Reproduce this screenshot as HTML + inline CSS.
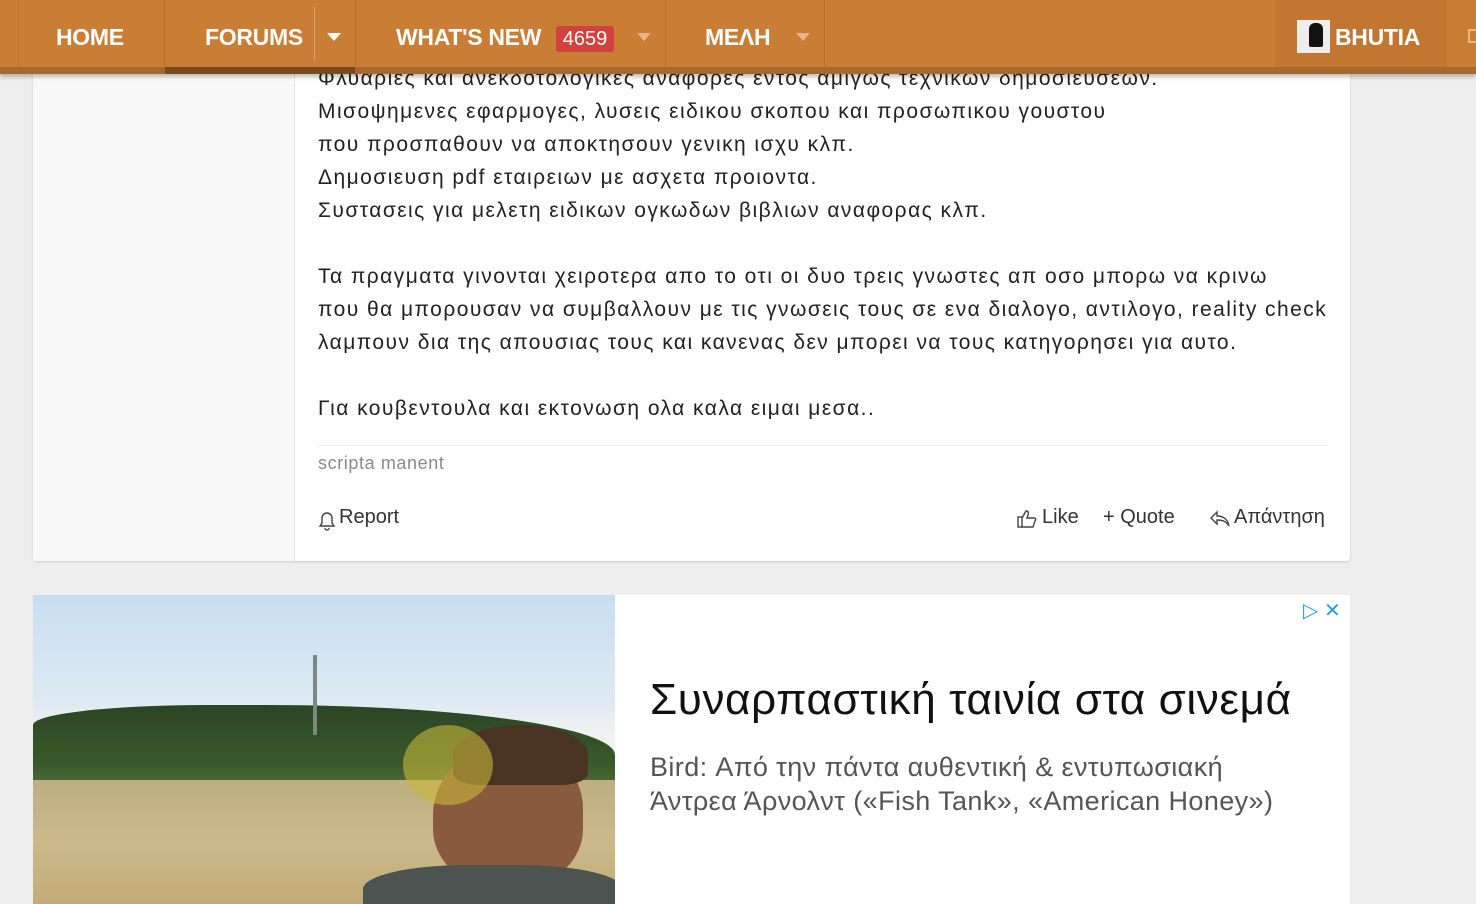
<!DOCTYPE html>
<html><head><meta charset="utf-8"><style>
*{margin:0;padding:0;box-sizing:border-box}
body{width:1476px;height:904px;overflow:hidden;background:#eeeeee;font-family:"Liberation Sans","DejaVu Sans",sans-serif;position:relative}
.nav{position:absolute;left:0;top:0;width:1476px;height:74px;background:#c97d35;box-shadow:0 3px 4px rgba(0,0,0,.25);z-index:5}
.nav .i{position:absolute;top:0;height:74px;color:#fff;font-weight:bold;font-size:23px;line-height:74px;letter-spacing:-0.3px}
.sep{position:absolute;top:0;width:1px;height:74px;background:#b86f2c}
.navb{position:absolute;left:0;top:67px;width:1476px;height:7px;background:#a9692e}
.tri{position:absolute;top:33px;width:0;height:0;border-left:7px solid transparent;border-right:7px solid transparent;border-top:8px solid #fff}
.card{position:absolute;left:33px;top:40px;width:1317px;height:521px;background:#fff;border-radius:4px;box-shadow:0 1px 2px rgba(0,0,0,.15)}
.left{position:absolute;left:0;top:0;width:262px;height:521px;background:#f9f9f9;border-right:1px solid #e2e2e2}
.txt{position:absolute;left:285px;top:22px;font-size:21px;line-height:33px;color:#222;white-space:nowrap;letter-spacing:1.45px}
.sig{position:absolute;left:285px;top:405px;width:1010px;border-top:1px solid #eaeaea;padding-top:7px;color:#8a8a8a;font-size:18px;letter-spacing:0.6px}
.act{position:absolute;top:466px;font-size:20px;color:#333}
.ad{position:absolute;left:33px;top:595px;width:1317px;height:309px;background:#fff}
.img{position:absolute;left:0;top:0;width:582px;height:309px;overflow:hidden;background:linear-gradient(#c7def0 0%,#dfeaf2 35%,#f0f2f0 45%)}
</style></head><body>
<div class="nav">
<div class="sep" style="left:18px"></div>
<div class="i" style="left:56px">HOME</div>
<div class="sep" style="left:164px"></div>
<div class="i" style="left:205px">FORUMS</div>
<div style="position:absolute;left:314px;top:7px;width:1px;height:54px;background:#dba36b"></div>
<div class="tri" style="left:327px"></div>
<div class="sep" style="left:355px"></div>
<div class="i" style="left:396px">WHAT'S NEW</div>
<div style="position:absolute;left:556px;top:26px;width:58px;height:26px;background:#d2423d;border-radius:3px;color:#fff;font-size:20px;line-height:26px;text-align:center">4659</div>
<div class="tri" style="left:637px;border-top-color:#e6b58a"></div>
<div class="sep" style="left:665px"></div>
<div class="i" style="left:705px">ΜΕΛΗ</div>
<div class="tri" style="left:796px;border-top-color:#e6b58a"></div>
<div class="sep" style="left:824px"></div>
<div style="position:absolute;left:1275px;top:0;width:170px;height:74px;background:#c27630"></div>
<div style="position:absolute;left:1297px;top:20px;width:33px;height:33px;background:#eee"><div style="position:absolute;left:12px;top:3px;width:14px;height:24px;background:#111;border-radius:6px 6px 2px 2px"></div></div>
<div class="i" style="left:1335px">BHUTIA</div>
<div class="sep" style="left:1445px"></div>
<div style="position:absolute;left:1468px;top:29px;width:12px;height:14px;border:2px solid #e6b58a"></div>
<div class="navb"></div>
<div style="position:absolute;left:165px;top:67px;width:190px;height:7px;background:#7a4a1e"></div>
</div>
<div class="card">
<div class="left"></div>
<div class="txt">Φλυαριες και ανεκδοτολογικες αναφορες εντος αμιγως τεχνικων δημοσιευσεων.<br>Μισοψημενες εφαρμογες, λυσεις ειδικου σκοπου και προσωπικου γουστου<br>που προσπαθουν να αποκτησουν γενικη ισχυ κλπ.<br>Δημοσιευση pdf εταιρειων με ασχετα προιοντα.<br>Συστασεις για μελετη ειδικων ογκωδων βιβλιων αναφορας κλπ.<br><br>Τα πραγματα γινονται χειροτερα απο το οτι οι δυο τρεις γνωστες απ οσο μπορω να κρινω<br>που θα μπορουσαν να συμβαλλουν με τις γνωσεις τους σε ενα διαλογο, αντιλογο, reality check<br>λαμπουν δια της απουσιας τους και κανενας δεν μπορει να τους κατηγορησει για αυτο.<br><br>Για κουβεντουλα και εκτονωση ολα καλα ειμαι μεσα..</div>
<div class="sig">scripta manent</div>
<svg style="position:absolute;left:285px;top:471px" width="18" height="20" viewBox="0 0 18 20" fill="none" stroke="#444" stroke-width="1.4"><path d="M9 2a5 5 0 0 1 5 5v5l2 3H2l2-3V7a5 5 0 0 1 5-5z"/><path d="M7 17a2 2 0 0 0 4 0"/></svg>
<div class="act" style="left:306px">Report</div>
<svg style="position:absolute;left:984px;top:469px" width="22" height="20" viewBox="0 0 22 20" fill="none" stroke="#444" stroke-width="1.4"><rect x="1" y="8" width="4" height="10"/><path d="M5 9l4-7c2 0 3 1 2 4l-1 3h7c2 0 2 2 1 3l-2 6H5"/></svg>
<div class="act" style="left:1009px">Like</div>
<div class="act" style="left:1070px">+ Quote</div>
<svg style="position:absolute;left:1176px;top:470px" width="22" height="18" viewBox="0 0 22 18" fill="none" stroke="#444" stroke-width="1.4"><path d="M8 2L2 8l6 6V10c5 0 9 1 12 6-1-6-5-10-12-10V2z"/></svg>
<div class="act" style="left:1201px">Απάντηση</div>
</div>
<div class="ad">
<div class="img">
<div style="position:absolute;left:0;top:110px;width:582px;height:100px;background:linear-gradient(#2b4524,#3a5a2a 60%,#667a45);border-radius:30% 60% 0 0/20% 50% 0 0"></div>
<div style="position:absolute;left:280px;top:60px;width:4px;height:80px;background:#7a8a80"></div>
<div style="position:absolute;left:0;top:185px;width:582px;height:124px;background:linear-gradient(#bdae80,#cbb98a 50%,#c2ab78)"></div>
<div style="position:absolute;left:400px;top:150px;width:150px;height:140px;background:#8a5a3e;border-radius:50% 45% 40% 40%"></div>
<div style="position:absolute;left:420px;top:130px;width:135px;height:60px;background:#4a3322;border-radius:50% 50% 20% 20%"></div>
<div style="position:absolute;left:330px;top:270px;width:260px;height:60px;background:#4c5350;border-radius:40% 40% 0 0"></div>
<div style="position:absolute;left:370px;top:130px;width:90px;height:80px;background:#c8b73a;border-radius:50%;opacity:.6"></div>
</div>
<div style="position:absolute;left:617px;top:80px;font-size:44px;letter-spacing:0.6px;color:#111;white-space:nowrap">Συναρπαστική ταινία στα σινεμά</div>
<div style="position:absolute;left:617px;top:155px;font-size:27px;letter-spacing:0.4px;line-height:34px;color:#555;white-space:nowrap">Bird: Από την πάντα αυθεντική &amp; εντυπωσιακή<br>Άντρεα Άρνολντ («Fish Tank», «American Honey»)</div>
<div style="position:absolute;left:1270px;top:3px;color:#2aa0d8;font-size:20px">▷ ✕</div>
</div>
</body></html>
